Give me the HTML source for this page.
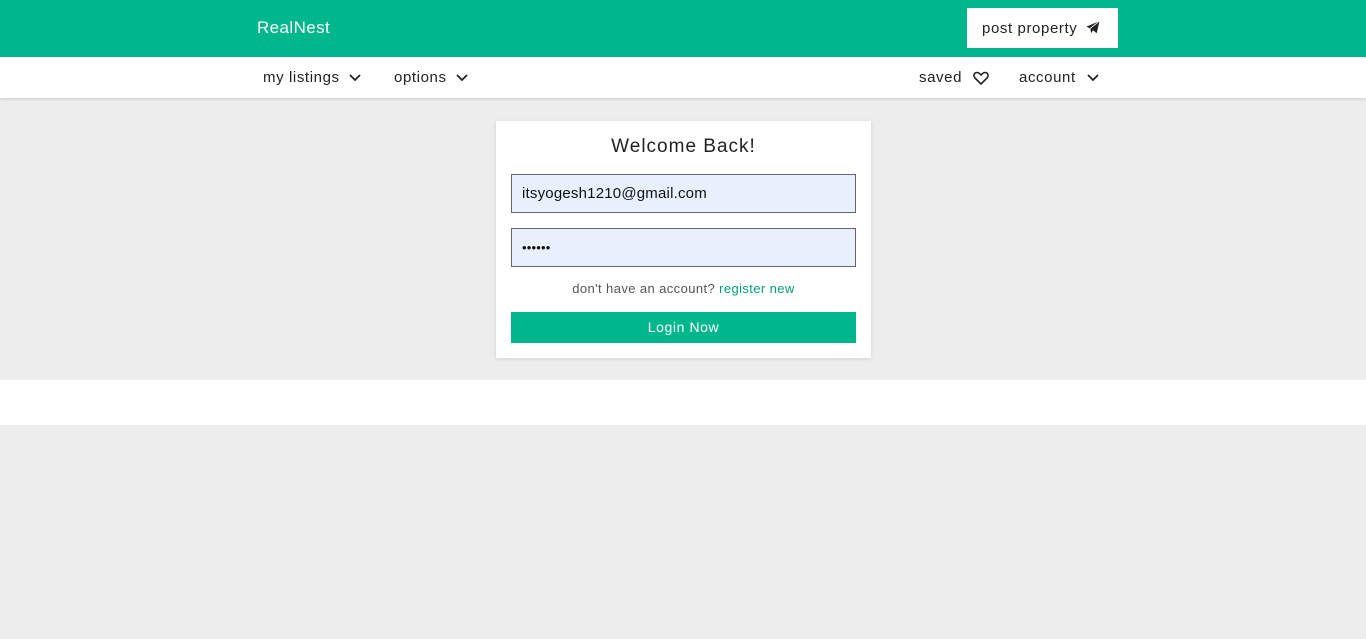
<!DOCTYPE html>
<html><head><style>
*{margin:0;padding:0;box-sizing:border-box}
body{width:1366px;height:639px;background:#ededed;font-family:"Liberation Sans",sans-serif;position:relative;overflow:hidden;color:#222}
.top{position:absolute;left:0;top:0;width:1366px;height:57px;background:#00b68c}
.logo{position:absolute;left:257px;top:18px;color:#fff;font-size:17px;letter-spacing:0.4px}
.post{position:absolute;left:967px;top:8px;width:151px;height:40px;background:#fff;font-size:15px;line-height:41px;padding-left:15px;color:#222;letter-spacing:0.6px}
.nav{position:absolute;left:0;top:57px;width:1366px;height:41px;background:#fff;box-shadow:0 1px 3px rgba(0,0,0,.15)}
.ni{position:absolute;top:12px;font-size:15px;color:#222;letter-spacing:0.6px}
.ni svg{vertical-align:middle;margin-left:9px}
.card{position:absolute;left:496px;top:121px;width:375px;height:237px;background:#fff;box-shadow:0 1px 4px rgba(0,0,0,.12)}
.card h1{position:absolute;top:15px;left:0;width:100%;text-align:center;font-size:19px;font-weight:normal;color:#222;letter-spacing:1px}
.in{position:absolute;left:15px;width:345px;height:39px;background:#e8f0fe;border:1px solid #666;font-size:15px;line-height:37px;padding-left:10px;color:#111;letter-spacing:0.2px}
.reg{position:absolute;top:160px;width:100%;text-align:center;font-size:13px;color:#555;letter-spacing:0.4px}
.reg span{color:#00a07a}
.btn{position:absolute;left:15px;top:191px;width:345px;height:31px;background:#00b68c;color:#fff;font-size:14px;text-align:center;line-height:31px;letter-spacing:0.6px}
.band{position:absolute;left:0;top:380px;width:1366px;height:45px;background:#fff}
</style></head><body>
<div class="top">
<div class="logo">RealNest</div>
<div class="post">post property <svg width="16" height="15" viewBox="0 0 16 16" style="vertical-align:-2px;margin-left:3px"><path d="M15 1L1 7l4 2 1 5 2-3 4 3z" fill="#222"/><path d="M15 1L5 9" stroke="#fff" stroke-width="1"/></svg></div>
</div>
<div class="nav">
<div class="ni" style="left:263px">my listings<svg width="12" height="8" viewBox="0 0 12 8"><path d="M1 1l5 5 5-5" stroke="#222" stroke-width="1.8" fill="none"/></svg></div>
<div class="ni" style="left:394px">options<svg width="12" height="8" viewBox="0 0 12 8"><path d="M1 1l5 5 5-5" stroke="#222" stroke-width="1.8" fill="none"/></svg></div>
<div class="ni" style="left:919px">saved<svg width="16" height="14" viewBox="0 0 16 14" style="margin-left:11px"><path d="M8 13L2 7C0 5 1 1.5 4 1.5c2 0 3 1.5 4 2.5 1-1 2-2.5 4-2.5 3 0 4 3.5 2 5.5z" stroke="#222" stroke-width="1.6" fill="none"/></svg></div>
<div class="ni" style="left:1019px">account<svg width="12" height="8" viewBox="0 0 12 8" style="margin-left:11px"><path d="M1 1l5 5 5-5" stroke="#222" stroke-width="1.8" fill="none"/></svg></div>
</div>
<div class="card">
<h1>Welcome Back!</h1>
<div class="in" style="top:53px">itsyogesh1210@gmail.com</div>
<div class="in" style="top:107px;font-size:13px">••••••</div>
<div class="reg">don't have an account? <span>register new</span></div>
<div class="btn">Login Now</div>
</div>
<div class="band"></div>
</body></html>
